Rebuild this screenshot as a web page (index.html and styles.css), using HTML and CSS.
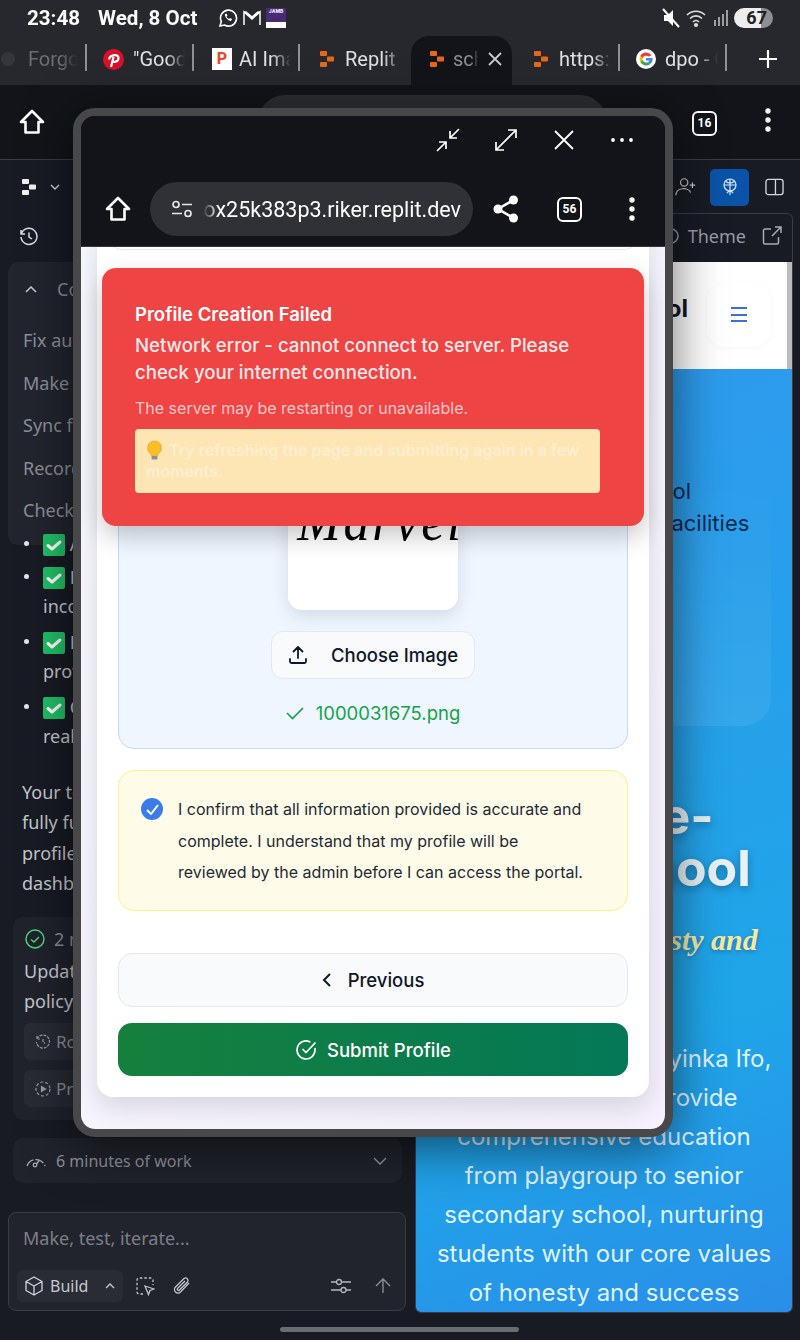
FILE: index.html
```html
<!DOCTYPE html>
<html lang="en">
<head>
  <meta charset="UTF-8">
  <title>Profile Creation Failed</title>
  <link rel="stylesheet" href="styles.css">
</head>
<body>
  <svg class="defs">
    <symbol id="replit" viewBox="0 0 14 16"><rect x="0" y="0" width="7" height="5" rx="1"/><rect x="7" y="5.500" width="7" height="5" rx="1"/><rect x="0" y="11" width="7" height="5" rx="1"/></symbol>
    <symbol id="home" viewBox="0 0 28 28"><path d="M14 3 3 14h4.500v10.500h13V14H25z" fill="none" stroke="currentColor" stroke-width="2.600" stroke-linejoin="round"/></symbol>
    <symbol id="dots" viewBox="0 0 6 24"><circle cx="3" cy="3" r="2.700"/><circle cx="3" cy="12" r="2.700"/><circle cx="3" cy="21" r="2.700"/></symbol>
    <symbol id="tick" viewBox="0 0 22 22"><rect width="22" height="22" rx="2" fill="#20c168"/><path d="m5 11.500 4 3.500 8-7" fill="none" stroke="#fff" stroke-width="3" stroke-linecap="round" stroke-linejoin="round"/></symbol>
  </svg>

  <header class="status">
    <span class="clock">23:48</span>
    <span class="clock date">Wed, 8 Oct</span>
    <svg class="st-ico" width="20" height="20" viewBox="0 0 20 20" fill="none" stroke="#fff" stroke-width="1.600"><path d="M2 18l1.300-4.500A8 8 0 1 1 6.500 17z"/><path d="M7 6c-1 2 3 7 6 7l1-2-2-1-1 1c-1-.5-2-1.500-2.500-2.500l1-1-1-2z" fill="#fff" stroke="none"/></svg>
    <svg class="st-ico" width="20" height="18" viewBox="0 0 20 18" fill="none" stroke="#fff" stroke-width="1.500"><path d="M2 16V3l8 7 8-7v13M2 3h2l6 5 6-5h2"/></svg>
    <span class="jamb"><b>JAMB</b><i>Lekki</i></span>
    <span class="st-right">
      <svg width="18" height="22" viewBox="0 0 18 22" fill="#fff"><path d="M2 8h4l5-5v16l-5-5H2z"/><path d="M1 2l16 18" stroke="#fff" stroke-width="2"/></svg>
      <svg width="22" height="20" viewBox="0 0 22 20" fill="none" stroke="#ddd" stroke-width="1.600"><path d="M1 7c5-5 13-5 18 0M4 10.500c3.500-3.500 8.500-3.500 12 0M7 14c2-2 4-2 6 0"/><circle cx="10" cy="17" r="1.300" fill="#ddd"/></svg>
      <span class="signal"><i></i><i></i><i></i><i></i></span>
      <span class="battery">67</span>
    </span>
  </header>

  <nav class="tabs">
    <div class="tab sep"><svg class="tab-ico dim" width="16" height="16" viewBox="0 0 16 16"><circle cx="8" cy="8" r="7" fill="#34363b"/></svg><span class="tab-text dim-text">Forgot</span></div>
    <div class="tab sep"><svg class="tab-ico" width="21" height="21" viewBox="0 0 21 21"><circle cx="10.500" cy="10.500" r="10.500" fill="#d8112a"/><path d="M8 18l2.500-10M6.500 10.500C5 6.500 15 4 15.500 8.500c.3 3.500-3.500 5.500-5.500 3.500" fill="none" stroke="#fff" stroke-width="2.200"/></svg><span class="tab-text">"Good</span></div>
    <div class="tab sep tab-tile"><span class="tile-p">P</span><span class="tab-text">AI Image</span></div>
    <div class="tab tab-rep"><svg class="tab-ico orange" width="14" height="16"><use href="#replit"/></svg><span class="tab-text">Replit</span></div>
    <div class="tab active"><svg class="tab-ico orange" width="14" height="16"><use href="#replit"/></svg><span class="tab-text short">school</span><svg width="14" height="14" viewBox="0 0 14 14" stroke="#c8c9cc" stroke-width="1.800"><path d="M1 1l12 12M13 1 1 13"/></svg></div>
    <div class="tab sep tab-rep wide"><svg class="tab-ico orange" width="14" height="16"><use href="#replit"/></svg><span class="tab-text">https://</span></div>
    <div class="tab sep"><svg class="tab-ico" width="20" height="20" viewBox="0 0 20 20"><circle cx="10" cy="10" r="10" fill="#fff"/><path d="M15.500 6.500A6.500 6.500 0 0 0 4.300 7l2.500 2a3.500 3.500 0 0 1 5.500-1.500z" fill="#ea4335"/><path d="M4.300 7a6.500 6.500 0 0 0 0 6l2.500-2a3.500 3.500 0 0 1 0-2z" fill="#fbbc05"/><path d="M4.300 13a6.500 6.500 0 0 0 10 2l-2.300-2a3.500 3.500 0 0 1-5.200-2z" fill="#34a853"/><path d="M16.500 9H10v2.600h3.500a3 3 0 0 1-1.500 1.400l2.300 2c1.700-1.500 2.500-3.700 2.200-6z" fill="#4285f4"/></svg><span class="tab-text">dpo - G</span></div>
    <div class="tab-plus"><svg width="20" height="20" viewBox="0 0 20 20" stroke="#fff" stroke-width="2.200"><path d="M10 1v18M1 10h18"/></svg></div>
  </nav>

  <div class="toolbar">
    <svg class="tb-home" width="28" height="28"><use href="#home"/></svg>
    <div class="tb-pill"></div>
    <span class="count count-top">16</span>
    <svg class="tb-dots" width="6" height="24" fill="#fff"><use href="#dots"/></svg>
  </div>

  <main class="workspace">
    <section class="agent">
      <div class="agent-top">
        <svg width="14" height="16" fill="#f2f2f2"><use href="#replit"/></svg>
        <svg class="ico-grey" width="10" height="6" viewBox="0 0 10 6" fill="none" stroke="currentColor" stroke-width="1.300"><path d="m1 1 4 4 4-4"/></svg>
      </div>
      <svg class="history" width="20" height="20" viewBox="0 0 20 20" fill="none" stroke="#dcdde0" stroke-width="1.500"><path d="M2.500 6.500A8 8 0 1 1 2 10M2 3v4h4M10 5.500V10l3 2"/></svg>

      <div class="queue">
        <div class="queue-head"><svg width="12" height="7" viewBox="0 0 12 7" fill="none" stroke="#c9cad0" stroke-width="1.500"><path d="m1 6 5-5 5 5"/></svg><span>Completed tasks</span></div>
        <p>Fix authentication</p>
        <p>Make sure profile saves</p>
        <p>Sync form fields</p>
        <p>Record the changes</p>
        <p>Check the server logs</p>
      </div>

      <ul class="checks">
        <li class="cut"><svg width="22" height="22"><use href="#tick"/></svg> All steps saved</li>
        <li><svg width="22" height="22"><use href="#tick"/></svg> Form data is no longer<br>incorrect</li>
        <li><svg width="22" height="22"><use href="#tick"/></svg> Errors shown on the<br>profile page</li>
        <li><svg width="22" height="22"><use href="#tick"/></svg> Changes shown in<br>real time</li>
      </ul>

      <p class="summary">Your teachers portal is now<br>fully functional, and the<br>profile form leads to the<br>dashboard.</p>

      <div class="done-card">
        <div class="done-head"><svg width="20" height="20" viewBox="0 0 20 20" fill="none" stroke="#4ade80" stroke-width="1.400"><circle cx="10" cy="10" r="9"/><path d="m6 10.500 3 2.500 5-5"/></svg><span>2 minutes ago</span></div>
        <p>Update the profile access<br>policy</p>
        <div class="done-btn"><svg width="16" height="16" viewBox="0 0 16 16" fill="none" stroke="#9a9ca4" stroke-width="1.200" stroke-dasharray="3 1"><path d="M2 5a6.500 6.500 0 1 1-.5 3M2 2v3h3M8 5v3l2 1.500"/></svg><span>Rollback here</span></div>
        <div class="done-btn"><svg width="16" height="16" viewBox="0 0 16 16" fill="none" stroke="#9a9ca4" stroke-width="1.200"><circle cx="8" cy="8" r="7" stroke-dasharray="3 2"/><path d="m6.500 5.500 4 2.500-4 2.500z" fill="#9a9ca4"/></svg><span>Preview</span></div>
      </div>

      <div class="work-row">
        <svg width="20" height="14" viewBox="0 0 20 14" fill="none" stroke="#a9abb2" stroke-width="1.300"><path d="M1 12a9.500 9.500 0 0 1 18 0" stroke-dasharray="9 2"/><circle cx="9" cy="11" r="1.800"/><path d="m10.500 10 3-4"/></svg>
        <span>6 minutes of work</span>
        <svg class="push" width="14" height="8" viewBox="0 0 14 8" fill="none" stroke="#9a9ca4" stroke-width="1.300"><path d="m1 1 6 6 6-6"/></svg>
      </div>

      <div class="composer">
        <div class="placeholder">Make, test, iterate...</div>
        <div class="composer-row">
          <div class="build">
            <svg width="18" height="20" viewBox="0 0 18 20" fill="none" stroke="#d4d5da" stroke-width="1.300" stroke-linejoin="round"><path d="M9 1 1 5.500v9L9 19l8-4.500v-9zM1 5.500 9 10l8-4.500M9 10v9"/></svg>
            <span>Build</span>
            <svg class="build-chev" width="10" height="6" viewBox="0 0 10 6" fill="none" stroke="#c9cad0" stroke-width="1.300"><path d="m1 5 4-4 4 4"/></svg>
          </div>
          <svg width="20" height="20" viewBox="0 0 20 20" fill="none" stroke="#c3c5cb" stroke-width="1.300"><path d="M8 18H4a2 2 0 0 1-2-2V4a2 2 0 0 1 2-2h12a2 2 0 0 1 2 2v5" stroke-dasharray="2.500 2"/><path d="m10 10 9 3-4 1.500-1.500 4z"/></svg>
          <svg class="clip" width="18" height="20" viewBox="0 0 18 20" fill="none" stroke="#c3c5cb" stroke-width="1.300"><path d="M16 7 7.500 16a3.500 3.500 0 0 1-5-5l8.500-8.500a2.500 2.500 0 0 1 3.500 3.500L6.500 14a1.200 1.200 0 0 1-2-1.500L12 5"/></svg>
          <svg class="push" width="20" height="16" viewBox="0 0 20 16" fill="none" stroke="#b4b6bc" stroke-width="1.300"><path d="M0 4h5M11 4h9M0 12h10M15 12h5"/><circle cx="8" cy="4" r="2.500"/><circle cx="12.500" cy="12" r="2.500"/></svg>
          <svg class="send" width="16" height="16" viewBox="0 0 16 16" fill="none" stroke="#8f9198" stroke-width="1.300"><path d="M8 15V1M1 8l7-7 7 7"/></svg>
        </div>
      </div>
    </section>

    <section class="side">
      <div class="side-top">
        <svg width="22" height="22" viewBox="0 0 24 22" fill="none" stroke="#c9cad0" stroke-width="1.300"><circle cx="10" cy="6" r="4"/><path d="M1 20c0-9 14-9 16-3M19 6v6M16 9h6"/></svg>
        <span class="publish"><svg width="14" height="18" viewBox="0 0 14 18" fill="none" stroke="#d7e7fb" stroke-width="1.200"><circle cx="7" cy="7" r="6"/><path d="M1 7h12M7 1v16M3 3.500c2 2 6 2 8 0M4 15l3-3 3 3"/></svg></span>
        <svg class="split" width="19" height="18" viewBox="0 0 20 18" fill="none" stroke="#d5d6da" stroke-width="1.400"><rect x="1" y="1" width="18" height="16" rx="2.500"/><path d="M11 1v16"/></svg>
      </div>
      <div class="preview">
        <div class="preview-bar">
          <svg width="16" height="16" viewBox="0 0 16 16" fill="none" stroke="#9a9ca4" stroke-width="1.500"><circle cx="8" cy="8" r="7"/></svg>
          <span>Theme</span>
          <svg width="20" height="20" viewBox="0 0 20 20" fill="none" stroke="#a9abb2" stroke-width="1.500"><path d="M9 3H3a1.500 1.500 0 0 0-1.500 1.500v12A1.500 1.500 0 0 0 3 18h12a1.500 1.500 0 0 0 1.500-1.500V11M10 10l9-9M13 1h6v6"/></svg>
        </div>
        <div class="site">
          <div class="site-head">
            <span class="site-name">Adeyinka School</span>
            <button class="burger"><i></i><i></i><i></i></button>
          </div>
          <div class="hero">
            <div class="hero-card">
              <p class="short-line">A leading private school</p>
              <p>with modern learning facilities</p>
            </div>
            <h2>Science-<br>High School</h2>
            <p class="motto">Founded on honesty and</p>
            <p class="intro">Headed by Mrs. Adeyinka Ifo,<br>our teachers all provide<br>comprehensive education<br>from playgroup to senior<br>secondary school, nurturing<br>students with our core values<br>of honesty and success</p>
          </div>
        </div>
      </div>
    </section>
  </main>

  <div class="home-bar"></div>

  <div class="popup">
    <div class="popup-top">
      <div class="win-controls">
        <svg width="24" height="24" viewBox="0 0 24 24" fill="none" stroke="#fff" stroke-width="1.700"><path d="M23 1 14 10M14 3v7h7M1 23l9-9M3 14h7v7"/></svg>
        <svg width="24" height="24" viewBox="0 0 24 24" fill="none" stroke="#fff" stroke-width="1.700"><path d="M2 22 22 2M14 2h8v8M2 14v8h8"/></svg>
        <svg width="24" height="24" viewBox="0 0 24 24" stroke="#fff" stroke-width="1.800"><path d="M3 3l18 18M21 3 3 21"/></svg>
        <svg width="24" height="24" viewBox="0 0 24 24" fill="#fff"><circle cx="3" cy="12" r="1.900"/><circle cx="12" cy="12" r="1.900"/><circle cx="21" cy="12" r="1.900"/></svg>
      </div>
      <div class="url-row">
        <svg width="28" height="28"><use href="#home"/></svg>
        <div class="url-pill">
          <svg width="22" height="18" viewBox="0 0 22 18" fill="none" stroke="#e6e6e8" stroke-width="1.700"><circle cx="5" cy="4.500" r="3"/><path d="M11 4.500h10M1 13.500h10"/><circle cx="17" cy="13.500" r="3"/></svg>
          <span class="url">ox25k383p3.riker.replit.dev</span>
        </div>
        <svg width="26" height="28" viewBox="0 0 26 28" fill="#fff"><circle cx="20.500" cy="5" r="4.500"/><circle cx="5" cy="14" r="4.500"/><circle cx="20.500" cy="23" r="4.500"/><path d="M20.500 5 5 14l15.500 9" fill="none" stroke="#fff" stroke-width="2.600"/></svg>
        <span class="count">56</span>
        <svg width="6" height="24" fill="#fff"><use href="#dots"/></svg>
      </div>
    </div>

    <div class="popup-body">
      <div class="card">
        <div class="prev-field"></div>
        <div class="upload">
          <div class="signature"><span>Marvel</span></div>
          <button class="choose">
            <svg width="20" height="20" viewBox="0 0 20 20" fill="none" stroke="#0f172a" stroke-width="1.800" stroke-linecap="round" stroke-linejoin="round"><path d="M10 13V2M5.500 6.500 10 2l4.500 4.500M2 14v2.500A1.500 1.500 0 0 0 3.500 18h13a1.500 1.500 0 0 0 1.500-1.500V14"/></svg>
            <span>Choose Image</span>
          </button>
          <div class="file-name">
            <svg width="18" height="14" viewBox="0 0 18 14" fill="none" stroke="#16a34a" stroke-width="1.700"><path d="m1 7 5.500 5.500L17 2"/></svg>
            <span>1000031675.png</span>
          </div>
        </div>

        <div class="confirm">
          <span class="radio"><svg width="13" height="11" viewBox="0 0 13 11" fill="none" stroke="#fff" stroke-width="1.900"><path d="m1 6 4 4 7-9"/></svg></span>
          <p>I confirm that all information provided is accurate and complete. I understand that my profile will be reviewed by the admin before I can access the portal.</p>
        </div>

        <button class="btn-prev">
          <svg width="10" height="14" viewBox="0 0 10 14" fill="none" stroke="#0f172a" stroke-width="2"><path d="M8 1 2 7l6 6"/></svg>
          <span>Previous</span>
        </button>
        <button class="btn-submit">
          <svg width="22" height="22" viewBox="0 0 22 22" fill="none" stroke="#fff" stroke-width="1.700" stroke-linecap="round"><path d="M20 9.500V11a9 9 0 1 1-5.300-8.200"/><path d="m8 10.500 3 3 9-9.500"/></svg>
          <span>Submit Profile</span>
        </button>
      </div>

      <div class="toast">
        <h3>Profile Creation Failed</h3>
        <p class="toast-msg">Network error - cannot connect to server. Please check your internet connection.</p>
        <p class="toast-sub">The server may be restarting or unavailable.</p>
        <p class="toast-hint"><svg width="17" height="20" viewBox="0 0 17 20"><path d="M8.500 1a7 7 0 0 0-4 12.700c.5.500.8 1.300.8 2.300h6.400c0-1 .3-1.800.8-2.300A7 7 0 0 0 8.500 1z" fill="#fbbf24" stroke="#e8a33d" stroke-width=".8"/><rect x="5.500" y="16" width="6" height="3.500" rx="1" fill="#8b8f9c"/></svg> Try refreshing the page and submitting again in a few moments.</p>
      </div>
    </div>
  </div>
</body>
</html>
```
FILE: styles.css
```css
* { box-sizing: border-box; }
html, body { margin: 0; padding: 0; }
body { width: 800px; height: 1340px; position: relative; overflow: hidden; background: #181b24; color: #fff; font-family: "Inter", sans-serif; }
p, h2, h3, ul { margin: 0; padding: 0; }
button { font-family: inherit; cursor: pointer; }
svg { display: block; flex-shrink: 0; }
.defs { display: none; }

/* phone status bar */
.status { height: 36px; background: #26282d; display: flex; align-items: center; padding: 0 27px; }
.clock { font-family: "Roboto", sans-serif; font-weight: 700; font-size: 21px; transform: scaleX(.98); transform-origin: left; }
.date { margin-left: 17px; margin-right: 16px; width: 104px; white-space: nowrap; }
.st-ico { margin-right: 4px; }
.jamb { width: 20px; height: 20px; background: linear-gradient(#4a2a78 70%, #fff 70%); font-size: 5px; text-align: center; display: flex; flex-direction: column; line-height: 7px; }
.jamb b { font-size: 5px; }
.jamb i { color: #333; font-style: normal; font-size: 4px; margin-top: 2px; line-height: 6px; }
.st-right { margin-left: auto; display: flex; align-items: center; gap: 6px; }
.signal { display: flex; align-items: flex-end; gap: 2px; height: 16px; width: 14px; }
.signal i { width: 2px; background: #9b9da1; height: 6px; }
.signal i:nth-child(2) { height: 9px; }
.signal i:nth-child(3) { height: 12px; }
.signal i:nth-child(4) { height: 16px; }
.battery { width: 39px; height: 20px; border-radius: 10px; background: linear-gradient(90deg, #eee 70%, #8e8f92 70%); color: #222; font-family: "Roboto", sans-serif; font-weight: 700; font-size: 18px; line-height: 20px; text-align: right; padding-right: 6px; }

/* browser tabs */
.tabs { height: 49px; background: #26282d; display: grid; grid-template-columns: 88px 107px 106px 110px 101px 109px 107px 72px; }
.tab { position: relative; display: flex; align-items: center; padding: 0 8px 3px 15px; gap: 9px; min-width: 0; font-family: "Roboto", sans-serif; font-size: 20px; color: #dfe0e2; }
.tab.sep { border-right: 2px solid transparent; }
.tab.sep::after { content: ""; position: absolute; right: -1px; top: 8px; height: 27px; width: 2px; background: #8f9094; }
.tab:first-child { padding-left: 0; gap: 12px; }
.tab.active { background: #121419; border-radius: 18px 18px 0 0; padding-left: 19px; }
.tab-rep { padding-left: 19px; gap: 11px; }
.tab-rep.wide { padding-left: 22px; }
.tab-tile { padding-left: 17px; gap: 7px; }
.tab-ico.orange { fill: #e8681a; }
.tab-text { flex: 1; overflow: hidden; white-space: nowrap; -webkit-mask-image: linear-gradient(90deg, #000 65%, transparent); mask-image: linear-gradient(90deg, #000 65%, transparent); }
.tab .short { color: #8e8f93; flex: 0 0 26px; }
.dim-text { color: #6d6e72; }
.tile-p { width: 20px; height: 22px; flex-shrink: 0; background: #fff; color: #e8482f; font-weight: 800; font-size: 16px; line-height: 22px; text-align: center; }
.tab-plus { display: flex; align-items: center; justify-content: center; padding: 0 0 3px 8px; }

/* browser toolbar */
.toolbar { height: 75px; background: #121419; display: flex; align-items: flex-start; padding: 23px 0 0 18px; border-bottom: 1px solid #3b3d43; }
.tb-pill { width: 349px; height: 54px; margin: -13px 0 0 212px; border-radius: 27px; background: #2c2e33; }
.count { width: 25px; height: 25px; border: 2.500px solid #fff; border-radius: 6px; font-family: "Roboto", sans-serif; font-weight: 700; font-size: 12px; line-height: 20px; text-align: center; flex-shrink: 0; }
.count-top { margin: 3px 0 0 85px; }
.tb-dots { margin-left: 48px; fill: #fff; }

/* layout under toolbar */
.workspace { height: 1180px; display: grid; grid-template-columns: 415px 378px; font-family: "Noto Sans", sans-serif; }

/* agent chat column */
.agent { display: flex; flex-direction: column; overflow: hidden; }
.agent-top { height: 53px; display: flex; align-items: center; gap: 9px; padding: 0 0 0 22px; }
.ico-grey { color: #d8d9dd; margin-left: 5px; }
.history { margin: 14px 0 15px 19px; }
.queue { margin-left: 8px; width: 398px; height: 283px; flex-shrink: 0; background: #22252e; border-radius: 10px; padding: 14px 15px; color: #8d8f97; font-size: 18px; }
.queue-head { display: flex; align-items: center; gap: 20px; height: 26px; padding-left: 2px; }
.queue p { height: 42.500px; line-height: 42.500px; white-space: nowrap; }
.queue-head + p { margin-top: 17px; }
.checks { list-style: none; margin-top: -18px; padding-left: 43px; color: #c6c8ce; font-size: 18px; line-height: 29px; height: 250px; flex-shrink: 0; }
.checks li { position: relative; padding-top: 3px; margin-bottom: 4px; }
.checks li svg { display: inline-block; vertical-align: -5px; }
.checks li::before { content: ""; position: absolute; left: -19px; top: 14px; width: 5px; height: 5px; border-radius: 50%; background: #e6e6e8; }
.checks li.cut { height: 29px; }
.summary { margin: 0 0 0 22px; color: #c6c8ce; font-size: 18px; line-height: 30.300px; white-space: nowrap; height: 140px; flex-shrink: 0; }
.done-card { margin-left: 13px; width: 389px; height: 203px; flex-shrink: 0; background: #20232c; border-radius: 10px; padding: 7px 11px; color: #c6c8ce; font-size: 18px; line-height: 30px; }
.done-head { display: flex; align-items: center; gap: 9px; margin-left: 1px; color: #8d8f97; }
.done-card > p { margin-top: 2px; }
.done-btn { display: flex; align-items: center; gap: 5px; height: 37px; background: #282b34; border-radius: 6px; padding-left: 11px; margin-bottom: 10px; color: #8d8f97; font-size: 17px; }
.done-card > p + .done-btn { margin-top: 7px; }
.work-row { margin: 18px 0 0 13px; width: 389px; height: 45px; flex-shrink: 0; background: #20232c; border-radius: 10px; display: flex; align-items: center; gap: 10px; padding: 0 15px 0 13px; color: #8f9198; font-size: 16px; }
.push { margin-left: auto; }
.composer { margin: 29px 0 0 8px; width: 398px; height: 99px; flex-shrink: 0; background: #21242d; border: 1px solid #3a3d47; border-radius: 8px; padding: 12px 8px 0; }
.placeholder { color: #7d7f87; font-size: 18px; padding-left: 6px; line-height: 26px; }
.composer-row { margin-top: 19px; display: flex; align-items: center; gap: 12px; padding-right: 6px; }
.build { width: 106px; height: 32px; background: #292c35; border-radius: 6px; display: flex; align-items: center; gap: 7px; padding-left: 8px; color: #c6c8ce; font-size: 16px; }
.build-chev { margin-left: 10px; }
.clip { margin-left: 6px; }
.send { margin-left: 12px; }

/* preview column */
.side { display: flex; flex-direction: column; }
.side-top { height: 53px; display: flex; align-items: center; justify-content: flex-end; gap: 13px; padding: 1px 9px 0 0; }
.publish { width: 39px; height: 37px; background: #0b53a8; border-radius: 5px; display: flex; align-items: center; justify-content: center; }
.split { margin-left: 3px; }
.preview { flex: 1; margin-bottom: 30px; border: 1px solid #3a3d47; border-radius: 6px; overflow: hidden; display: flex; flex-direction: column; }
.preview-bar { height: 48px; display: flex; align-items: center; justify-content: flex-end; gap: 16px; padding: 0 10px 4px 0; color: #9a9ca4; font-size: 18px; }
.preview-bar span { margin-left: -7px; }
.site { flex: 1; display: flex; flex-direction: column; font-family: "Inter", sans-serif; }
.site-head { height: 107px; background: #fff; display: flex; align-items: center; justify-content: flex-end; padding-right: 16px; gap: 19px; color: #101827; border-right: 5px solid #bbb; }
.site-name { font-size: 24px; font-weight: 700; white-space: nowrap; margin-bottom: 15px; }
.burger { width: 64px; height: 64px; margin-top: -2px; border: 0; border-radius: 18px; background: #fff; box-shadow: 0 1px 5px rgba(0, 0, 0, .04); display: flex; flex-direction: column; align-items: center; justify-content: center; gap: 4.500px; }
.burger i { width: 16px; height: 2px; background: #3b6fd8; }
.hero { flex: 1; background: linear-gradient(160deg, #3099ec 0%, #1fa5e8 70%, #2a8ee8 100%); text-align: center; overflow: hidden; }
.hero-card { margin: 106px 21px 0; height: 251px; padding-right: 34px; border-radius: 28px; background: linear-gradient(rgba(255, 255, 255, 0), rgba(255, 255, 255, .07)); color: #0f2b52; font-size: 22px; line-height: 32px; text-align: right; white-space: nowrap; }
.hero-card .short-line { padding-right: 46px; }
.hero h2 { margin-top: 64px; color: #e9f1f5; font-size: 50px; font-weight: 700; line-height: 52px; white-space: nowrap; text-shadow: 0 3px 8px rgba(0, 0, 0, .3); }
.motto { margin-top: 28px; height: 117px; color: #f8e8a4; font-family: "Liberation Serif", serif; font-weight: 700; font-style: italic; font-size: 30px; line-height: 36px; white-space: nowrap; text-shadow: 0 2px 4px rgba(0, 0, 0, .25); }
.intro { color: #dff3ff; font-size: 24px; line-height: 39px; white-space: nowrap; }

.home-bar { position: absolute; left: 280px; bottom: 8px; width: 239px; height: 5px; border-radius: 3px; background: #6b6c70; }

/* floating popup window */
.popup { position: absolute; left: 73px; top: 108px; width: 600px; height: 1029px; border: 8px solid #48484b; border-radius: 22px; background: #121419; box-shadow: 0 10px 50px rgba(0, 0, 0, .55); overflow: hidden; display: flex; flex-direction: column; }
.popup-top { height: 131px; flex-shrink: 0; background: #121419; border-bottom: 1px solid #34363b; }
.win-controls { display: flex; justify-content: flex-end; gap: 34px; padding: 12px 31px 0 0; }
.url-row { display: flex; align-items: center; margin-top: 30px; padding-left: 23px; }
.url-pill { width: 323px; height: 54px; margin-left: 18px; margin-right: 20px; padding-left: 21px; border-radius: 27px; background: #2f3136; display: flex; align-items: center; gap: 10px; overflow: hidden; }
.url { flex: 1; text-align: right; padding-right: 12px; font-family: "Roboto", sans-serif; font-size: 21.500px; white-space: nowrap; overflow: hidden; direction: rtl; -webkit-mask-image: linear-gradient(90deg, transparent, #000 16px); mask-image: linear-gradient(90deg, transparent, #000 16px); }
.url-row .count { margin: 0 47px 0 38px; }
.popup-body { flex: 1; min-height: 0; position: relative; overflow: hidden; display: flex; flex-direction: column; justify-content: flex-end; padding: 0 16px 32px 16px; background: linear-gradient(135deg, #f8fafe, #f6f1fc); }

/* form card */
.card { flex-shrink: 0; background: #fff; border-radius: 16px; padding: 0 21px 21px; box-shadow: 0 10px 28px rgba(15, 23, 42, .14); }
.prev-field { height: 30px; margin: 0 -10px 170px; border: 1px solid #e2e8f0; border-top: 0; border-radius: 0 0 14px 14px; }
.upload { height: 329px; border: 1px solid #bfdbfe; border-radius: 16px; background: #eff6ff; padding-top: 19px; display: flex; flex-direction: column; align-items: center; }
.signature { width: 170px; height: 170px; flex-shrink: 0; border-radius: 14px; background: #fff; box-shadow: 0 6px 18px rgba(15, 23, 42, .12); overflow: hidden; color: #000; text-align: center; }
.signature span { display: inline-block; margin-top: 49px; font-family: "Liberation Serif", serif; font-style: italic; font-size: 58px; line-height: 64px; letter-spacing: 3px; transform: scaleX(.9); }
.choose { margin-top: 21px; width: 204px; height: 48px; border: 1px solid #e2e8f0; border-radius: 12px; background: #f8fafc; display: flex; align-items: center; padding: 0 0 0 16px; gap: 23px; color: #0f172a; font-size: 18.500px; font-weight: 500; }
.file-name { margin-top: 23px; display: flex; align-items: center; gap: 12px; color: #16a34a; font-size: 18.500px; line-height: 22px; }
.confirm { margin-top: 21px; height: 141px; border: 1px solid #fef08a; border-radius: 16px; background: #fefce8; display: flex; gap: 15px; padding: 23px 36px 0 22px; }
.radio { width: 22px; height: 22px; margin-top: 4px; border-radius: 50%; background: #3b7de8; display: flex; align-items: center; justify-content: center; flex-shrink: 0; }
.confirm p { color: #1f2937; font-size: 16px; line-height: 31.500px; }
.btn-prev, .btn-submit { width: 100%; display: flex; align-items: center; justify-content: center; border-radius: 14px; font-size: 18.500px; font-weight: 500; }
.btn-prev { margin-top: 42px; height: 54px; gap: 16px; border: 1px solid #e2e8f0; background: #f8fafc; color: #0f172a; }
.btn-submit { margin-top: 16px; height: 53px; gap: 10px; border: 0; background: linear-gradient(90deg, #15803d, #047857); color: #fff; }

/* error toast */
.toast { position: absolute; left: 21px; top: 21px; width: 542px; height: 258px; padding: 35px 44px 0 33px; border-radius: 14px; background: #ef4444; box-shadow: 0 10px 24px rgba(0, 0, 0, .22); }
.toast h3 { font-size: 18.500px; font-weight: 600; line-height: 22px; }
.toast-msg { margin-top: 7px; color: #fee9e9; font-size: 18.600px; font-weight: 500; line-height: 27px; }
.toast-sub { margin-top: 11px; color: #fcc6c6; font-size: 16px; line-height: 22px; }
.toast-hint { margin-top: 10px; height: 64px; padding: 11px 11px 0; border-radius: 4px; background: #fde6b3; color: #fdeed2; font-size: 16px; font-weight: 600; line-height: 21px; }
.toast-hint svg { display: inline-block; vertical-align: -4px; margin-right: 2px; }
```
